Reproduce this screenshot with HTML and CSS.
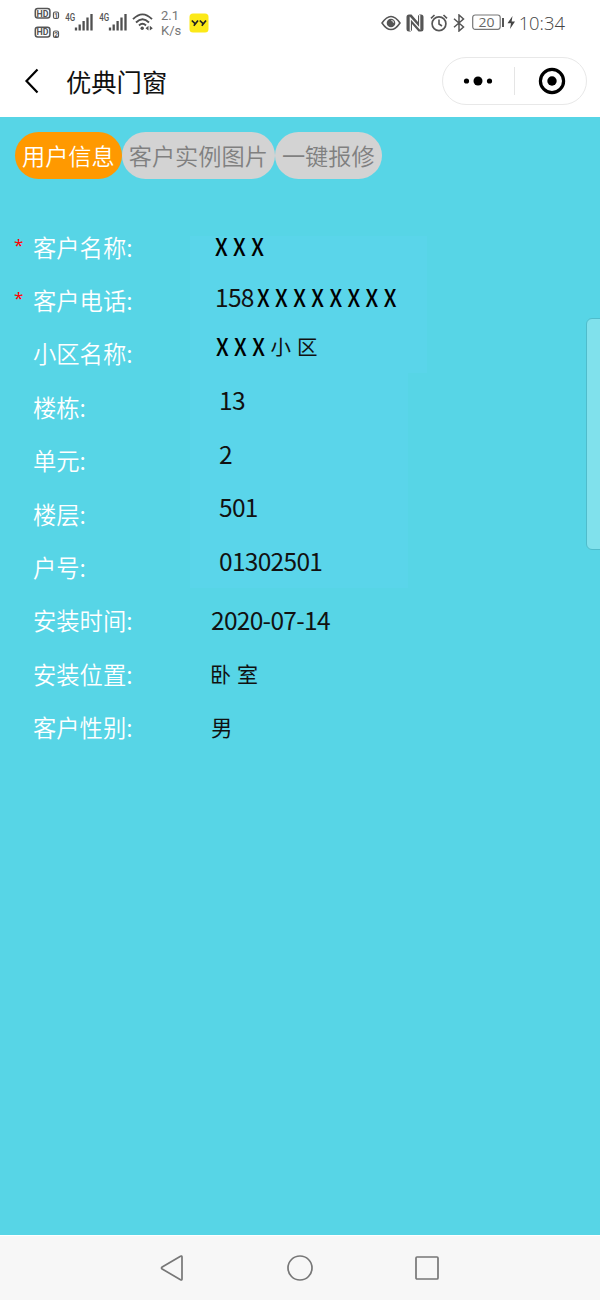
FILE: index.html
```html
<!DOCTYPE html>
<html lang="zh-CN">
<head>
    <meta charset="UTF-8">
    <meta name="viewport" content="width=device-width, initial-scale=1.0">
    <title>优典门窗</title>
    <link rel="stylesheet" href="styles.css">
</head>
<body>
    <div class="status-bar">
        <svg class="hd" width="26" height="32" viewBox="0 0 26 32">
            <rect x="1.3" y="1.5" width="14.6" height="9.6" rx="2.5" fill="none" stroke="#555" stroke-width="1.5"/>
            <text x="2.6" y="9.6" font-size="9.5" font-weight="bold" textLength="12" lengthAdjust="spacingAndGlyphs">HD</text>
            <rect x="19.5" y="5" width="5" height="6.5" rx="1.5" fill="none" stroke="#555" stroke-width="1.2"/>
            <text x="20.2" y="10.5" font-size="6.5" font-weight="bold">1</text>
            <rect x="1.3" y="20.3" width="14.6" height="9.6" rx="2.5" fill="none" stroke="#555" stroke-width="1.5"/>
            <text x="2.6" y="28.4" font-size="9.5" font-weight="bold" textLength="12" lengthAdjust="spacingAndGlyphs">HD</text>
            <rect x="19.5" y="24" width="5" height="6.5" rx="1.5" fill="none" stroke="#555" stroke-width="1.2"/>
            <text x="20.2" y="29.5" font-size="6.5" font-weight="bold">2</text>
        </svg>
        <svg class="signal" width="29" height="20" viewBox="0 0 29 20">
            <text x="0.3" y="9.3" font-size="10.5" font-weight="500" textLength="10" lengthAdjust="spacingAndGlyphs">4G</text>
            <path d="M11 15.5V18.5M14.7 12.5V18.5M18.6 9V18.5M22.5 5.5V18.5M26.5 2V18.5" stroke="#505050" stroke-width="2.3"/>
        </svg>
        <svg class="signal" width="29" height="20" viewBox="0 0 29 20">
            <text x="0.3" y="9.3" font-size="10.5" font-weight="500" textLength="10" lengthAdjust="spacingAndGlyphs">4G</text>
            <path d="M11 15.5V18.5M14.7 12.5V18.5M18.6 9V18.5M22.5 5.5V18.5M26.5 2V18.5" stroke="#505050" stroke-width="2.3"/>
        </svg>
        <svg class="wifi" width="22" height="18" viewBox="0 0 22 18">
            <path d="M1 6.2Q10.5-3.5 20 6.2M4 9.5Q10.5 3 17 9.5M7 12.5Q10.5 9.2 14 12.5" fill="none" stroke="#505050" stroke-width="1.9"/>
            <circle cx="10.2" cy="15.3" r="1.7" fill="#505050"/>
            <path d="M16.5 12.8V17.5L13.5 15.2ZM17.8 12.8V17.5L20.8 15.2Z" fill="#505050"/>
        </svg>
        <div class="speed"><span>2.1</span><span>K/s</span></div>
        <svg class="yy" width="20" height="20" viewBox="0 0 20 20">
            <rect x="0.5" y="0.5" width="19" height="19" rx="3.5" fill="#fce918"/>
            <path d="M2.8 7.5L5.8 10.3M9 7.5L4.8 12.8M10.8 7.5L13.8 10.3M17 7.5L12.8 12.8" fill="none" stroke="#222" stroke-width="1.7"/>
        </svg>
        <div class="status-right">
            <svg width="20" height="16" viewBox="0 0 20 16">
                <path d="M1 8Q10-5.2 19 8Q10 21.2 1 8Z" fill="none" stroke="#555" stroke-width="1.5"/>
                <circle cx="10" cy="8" r="4.3" fill="#555"/>
                <path d="M10.3 5.5A2 2 0 0 1 12.5 7.7" fill="none" stroke="#ddd" stroke-width="1.2"/>
            </svg>
            <svg class="nfc" width="18" height="18" viewBox="0 0 18 18">
                <path d="M3 0.5H5.5L12 8V1.8L13.5 0.5H15Q17.5 0.5 17.5 3V15Q17.5 17.5 15 17.5H12.5L6 10V16.2L4.5 17.5H3Q0.5 17.5 0.5 15V3Q0.5 0.5 3 0.5Z" fill="#555"/>
                <path d="M4.3 17V4L13.7 14.5V1" fill="none" stroke="#fff" stroke-width="1.2"/>
            </svg>
            <svg class="alarm" width="18" height="18" viewBox="0 0 18 18">
                <circle cx="9" cy="9.7" r="6.9" fill="none" stroke="#555" stroke-width="1.7"/>
                <path d="M9 5.5V10L12 12M1 4.3L4.5 1M17 4.3L13.5 1" fill="none" stroke="#555" stroke-width="1.6"/>
            </svg>
            <svg class="bt" width="12" height="18" viewBox="0 0 12 18">
                <path d="M1 4.8L10.5 13L6 17V1L10.5 5L1 13.2" fill="none" stroke="#555" stroke-width="1.5"/>
            </svg>
            <svg class="battery" width="44" height="17" viewBox="0 0 44 17">
                <rect x="0.7" y="1" width="27.5" height="14.3" rx="2.5" fill="none" stroke="#777" stroke-width="1.2"/>
                <text class="level" x="6.5" y="13" font-size="13.5" textLength="16" lengthAdjust="spacingAndGlyphs">20</text>
                <path d="M31 4V13" stroke="#555" stroke-width="2"/>
                <path d="M40.5 2L35.5 9.2H39L38 15L43 7.5H39.6Z" fill="#444"/>
            </svg>
            <span class="time">10:34</span>
        </div>
    </div>

    <div class="nav-bar">
        <svg class="back" width="16" height="26" viewBox="0 0 16 26">
            <path d="M13.5 1.5L2.5 13L13.5 24.5" fill="none" stroke="#000" stroke-width="2.2"/>
        </svg>
        <h1>优典门窗</h1>
        <div class="capsule">
            <svg width="30" height="10" viewBox="0 0 30 10">
                <circle cx="3.5" cy="5" r="2.6"/>
                <circle cx="15" cy="5" r="4.5"/>
                <circle cx="26.5" cy="5" r="2.6"/>
            </svg>
            <span class="divider"></span>
            <svg width="28" height="28" viewBox="0 0 28 28">
                <circle cx="14" cy="14" r="11.6" fill="none" stroke="#000" stroke-width="3.2"/>
                <circle cx="14" cy="14" r="4.7"/>
            </svg>
        </div>
    </div>

    <div class="content">
        <div class="tabs">
            <div class="tab active">用户信息</div>
            <div class="tab">客户实例图片</div>
            <div class="tab">一键报修</div>
        </div>

        <div class="info">
            <div class="row"><span class="star">*</span><label>客户名称:</label><span class="value name"><b>XXX</b></span></div>
            <div class="row"><span class="star">*</span><label>客户电话:</label><span class="value phone">158<b>XXXXXXXX</b></span></div>
            <div class="row"><span class="star"></span><label>小区名称:</label><span class="value area"><b>XXX</b><i>小区</i></span></div>
            <div class="row"><span class="star"></span><label>楼栋:</label><span class="value house">13</span></div>
            <div class="row"><span class="star"></span><label>单元:</label><span class="value house">2</span></div>
            <div class="row"><span class="star"></span><label>楼层:</label><span class="value house">501</span></div>
            <div class="row"><span class="star"></span><label>户号:</label><span class="value house">01302501</span></div>
            <div class="row"><span class="star"></span><label>安装时间:</label><span class="value">2020-07-14</span></div>
            <div class="row"><span class="star"></span><label>安装位置:</label><span class="value place">卧室</span></div>
            <div class="row"><span class="star"></span><label>客户性别:</label><span class="value sex">男</span></div>
        </div>

        <div class="side-handle"></div>
    </div>

    <div class="system-nav">
        <svg width="26" height="28" viewBox="0 0 26 28">
            <path d="M20.5 2.2Q22 1.5 22 3V25Q22 26.500 20.5 25.8L2.200 15Q0.800 14 2.200 13Z" fill="none" stroke="#777" stroke-width="1.7"/>
        </svg>
        <svg width="28" height="28" viewBox="0 0 28 28">
            <circle cx="14" cy="14" r="12" fill="none" stroke="#777" stroke-width="1.7"/>
        </svg>
        <svg width="26" height="28" viewBox="0 0 26 28">
            <rect x="2" y="3" width="22" height="22" rx="1" fill="none" stroke="#777" stroke-width="1.7"/>
        </svg>
    </div>
</body>
</html>
```
FILE: styles.css
```css
* { box-sizing: border-box; }
body { margin: 0; width: 600px; height: 1300px; display: flex; flex-direction: column; overflow: hidden; background: #fff; font-family: "Noto Sans CJK SC", sans-serif; }
svg { display: block; flex: none; }

.status-bar { height: 46px; flex: none; display: flex; align-items: flex-start; padding: 7px 35px 0 34px; color: #555; }
.status-bar text { fill: #555; font-family: Roboto, sans-serif; }
.status-bar .level { fill: #666; font-family: "Open Sans", sans-serif; }
.signal { margin: 5px 0 0 5px; }
.wifi { margin: 6px 0 0 4px; }
.speed { width: 24px; margin: 1px 0 0 7px; display: flex; flex-direction: column; font: 13px/15px Roboto, sans-serif; color: #777; }
.yy { margin: 6px 0 0 4px; }
.status-right { margin-left: auto; height: 31px; display: flex; align-items: center; }
.nfc { margin-left: 5px; }
.alarm { margin-left: 6px; }
.bt { margin-left: 5px; }
.battery { margin-left: 7px; }
.time { margin-left: 3px; font: 300 18.4px/24px "Open Sans", sans-serif; color: #444; }

.nav-bar { height: 71px; flex: none; display: flex; align-items: center; padding: 0 13px 2px 24px; }
.nav-bar h1 { margin: 0 0 0 26px; font-size: 25.3px; line-height: 36px; font-weight: 400; color: #111; }
.capsule { width: 145px; height: 48px; margin-left: auto; display: flex; align-items: center; justify-content: space-between; padding: 0 20px; border: 1px solid #e8e8e8; border-radius: 24px; }
.divider { width: 1px; height: 28px; margin-left: 7px; margin-right: 9px; background: #e5e5e5; }

.content { position: relative; flex: 1; padding: 15px; background: #57d5e6; }
.tabs { display: flex; }
.tab { height: 47px; padding: 0 7px; border-radius: 24px; background: #d3d3d3; color: #808080; font-size: 23.2px; line-height: 47px; font-weight: 350; white-space: nowrap; }
.tab.active { background: #ff9900; color: #fff; }

.info { margin: 41px -15px 0; background: linear-gradient(#5ad5ea, #5ad5ea) 190px 16px / 237px 137px no-repeat, linear-gradient(#5ad5ea, #5ad5ea) 190px 153px / 218px 215px no-repeat; }
.row { height: 53.4px; display: flex; align-items: center; font-size: 23.3px; line-height: 34px; }
.star { width: 19px; margin-left: 14px; color: #f00; font: 17px/34px "Noto Sans", sans-serif; padding-bottom: 4px; }
.row label { width: 178px; color: #fff; font-weight: 350; }
.value { display: flex; color: #111; font-size: 24.5px; letter-spacing: -0.7px; white-space: nowrap; }
.value b { color: #000; font-size: 24.5px; font-weight: 500; letter-spacing: 6.2px; transform: scaleX(0.87); transform-origin: left center; }
.value i { font-style: normal; font-size: 20.5px; letter-spacing: 6px; }
.name { padding: 0 0 1px 4px; }
.phone { padding: 0 0 7px 4px; }
.phone b { margin-left: 3px; margin-right: -20px; }
.area { padding: 0 0 14px 5px; }
.area b { margin-right: -8px; }
.house { padding: 0 0 13px 8px; }
.place { font-size: 21px; letter-spacing: 6px; padding-bottom: 2px; margin-left: -1px; }
.sex { font-size: 21.5px; }

.side-handle { position: absolute; right: -1px; top: 201px; width: 15px; height: 232px; border: 1px solid #4fbccb; border-radius: 6px 0 0 6px; background: #80e1ec; }

.system-nav { height: 65px; flex: none; display: flex; align-items: center; justify-content: space-between; padding: 0 160px; background: #f7f7f7; border-top: 1px solid #fff; }
```
